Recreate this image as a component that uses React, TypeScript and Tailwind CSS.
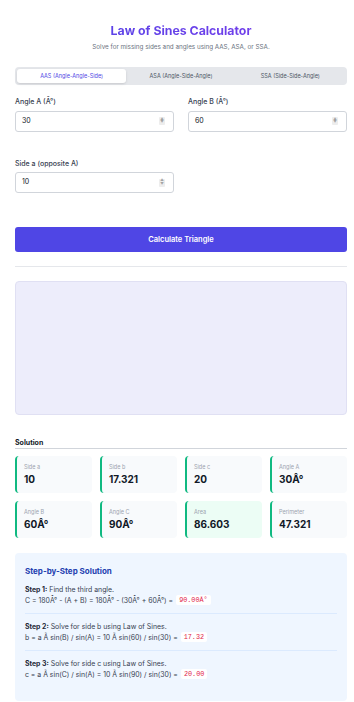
import { useState } from 'react';

const MODES = ['AAS (Angle-Angle-Side)', 'ASA (Angle-Side-Angle)', 'SSA (Side-Side-Angle)'];

const RESULTS: { label: string; value: string; highlight?: boolean }[] = [
    { label: 'Side a', value: '10' },
    { label: 'Side b', value: '17.321' },
    { label: 'Side c', value: '20' },
    { label: 'Angle A', value: '30Â°' },
    { label: 'Angle B', value: '60Â°' },
    { label: 'Angle C', value: '90Â°' },
    { label: 'Area', value: '86.603', highlight: true },
    { label: 'Perimeter', value: '47.321' },
];

const NumberField = ({ label, value }: { label: string; value: string }) => (
    <div className="flex flex-col gap-[4.5px]">
        <label className="text-[7px] font-medium leading-[9px] text-[#374151]">{label}</label>
        <div className="flex h-[21px] items-center justify-between rounded-[3px] border border-[#d1d5db] bg-white pl-[6px] pr-[8px]">
            <span className="text-[7px] text-[#111827]">{value}</span>
            <span className="flex h-[8px] w-[6px] flex-col items-center justify-center rounded-[1px] bg-[#ededed] text-[3.5px] leading-[3.5px] text-[#a3a3a3]">
                <span>▲</span>
                <span>▼</span>
            </span>
        </div>
    </div>
);

const Step = ({ n, text, formula, result, last }: { n: number; text: string; formula: string; result: string; last?: boolean }) => (
    <div className={last ? 'pt-[8px]' : 'border-b border-[#dbeafe] pb-[8px] pt-[8px] first:pt-0'}>
        <div className="text-[6.9px] leading-[9px] text-[#374151]">
            <span className="font-bold text-[#1f2937]">Step {n}:</span> {text}
        </div>
        <div className="mt-[1px] flex items-center text-[6.9px] leading-[9px] text-[#374151]">
            <span>{formula}</span>
            <span className="ml-[3px] rounded-[2px] bg-white px-[3px] font-['Liberation_Mono',monospace] text-[6.8px] leading-[10px] text-[#e11d48]">
                {result}
            </span>
        </div>
    </div>
);

export default function App() {
    const [mode, setMode] = useState(0);

    return (
        <div className="min-h-[702px] bg-white pl-[15px] pr-[7px] pt-[23px] font-['Inter',sans-serif]">
            <h1 className="bg-gradient-to-r from-[#4f46e5] to-[#7c3aed] bg-clip-text text-center text-[12.3px] font-bold leading-[15px] text-transparent">
                Law of Sines Calculator
            </h1>
            <p className="mt-[5px] text-center text-[6.3px] leading-[9px] text-[#6b7280]">
                Solve for missing sides and angles using AAS, ASA, or SSA.
            </p>

            {/* mode tabs */}
            <div className="mt-[15px] grid h-[18px] grid-cols-3 rounded-[4px] bg-[#e5e7eb] p-[2px]">
                {MODES.map((m, i) => (
                    <button
                        key={m}
                        onClick={() => setMode(i)}
                        className={
                            i === mode
                                ? 'rounded-[3px] bg-white text-[5.5px] text-[#4f46e5] shadow-sm'
                                : 'text-[5.5px] text-[#4b5563]'
                        }
                    >
                        {m}
                    </button>
                ))}
            </div>

            <div className="mt-[12px] grid grid-cols-2 gap-x-[14px]">
                <NumberField label="Angle A (Â°)" value="30" />
                <NumberField label="Angle B (Â°)" value="60" />
            </div>
            <div className="mt-[27px] grid grid-cols-2 gap-x-[14px]">
                <NumberField label="Side a (opposite A)" value="10" />
            </div>

            <button className="mt-[34px] block h-[25px] w-full rounded-[3px] bg-[#4f46e5] text-[7.5px] font-semibold text-white">
                Calculate Triangle
            </button>

            <div className="mt-[14px] h-px bg-[#e5e7eb]" />

            {/* triangle canvas */}
            <div className="mt-[14px] h-[134px] rounded-[4px] border border-[#e0e0f3] bg-[#ededfb]" />

            <div className="mt-[23px] border-b border-[#d1d5db] pb-[1px] text-[7px] font-bold leading-[9px] text-[#111827]">
                Solution
            </div>

            <div className="mt-[7px] grid grid-cols-4 gap-x-[8px] gap-y-[8px]">
                {RESULTS.map(r => (
                    <div
                        key={r.label}
                        className={
                            'flex h-[37px] flex-col justify-center rounded-[4px] border-l-2 border-[#10b981] pb-[2px] pl-[7px] ' +
                            (r.highlight ? 'bg-[#ecfdf5]' : 'bg-[#f8fafc]')
                        }
                    >
                        <span className="text-[5.5px] leading-[8px] text-[#9ca3af]">{r.label}</span>
                        <span className="mt-[2px] text-[10px] font-bold leading-[12px] text-[#111827]">{r.value}</span>
                    </div>
                ))}
            </div>

            {/* step-by-step */}
            <div className="mt-[15px] h-[148px] rounded-[4px] bg-[#eff6ff] px-[10px] pt-[13px]">
                <h2 className="text-[8px] font-bold leading-[10px] text-[#1e40af]">Step-by-Step Solution</h2>
                <div className="mt-[9px]">
                    <Step
                        n={1}
                        text="Find the third angle."
                        formula="C = 180Â° - (A + B) = 180Â° - (30Â° + 60Â°) ="
                        result="90.00Â°"
                    />
                    <Step
                        n={2}
                        text="Solve for side b using Law of Sines."
                        formula="b = a Ã sin(B) / sin(A) = 10 Ã sin(60) / sin(30) ="
                        result="17.32"
                    />
                    <Step
                        n={3}
                        text="Solve for side c using Law of Sines."
                        formula="c = a Ã sin(C) / sin(A) = 10 Ã sin(90) / sin(30) ="
                        result="20.00"
                        last
                    />
                </div>
            </div>
        </div>
    );
}
